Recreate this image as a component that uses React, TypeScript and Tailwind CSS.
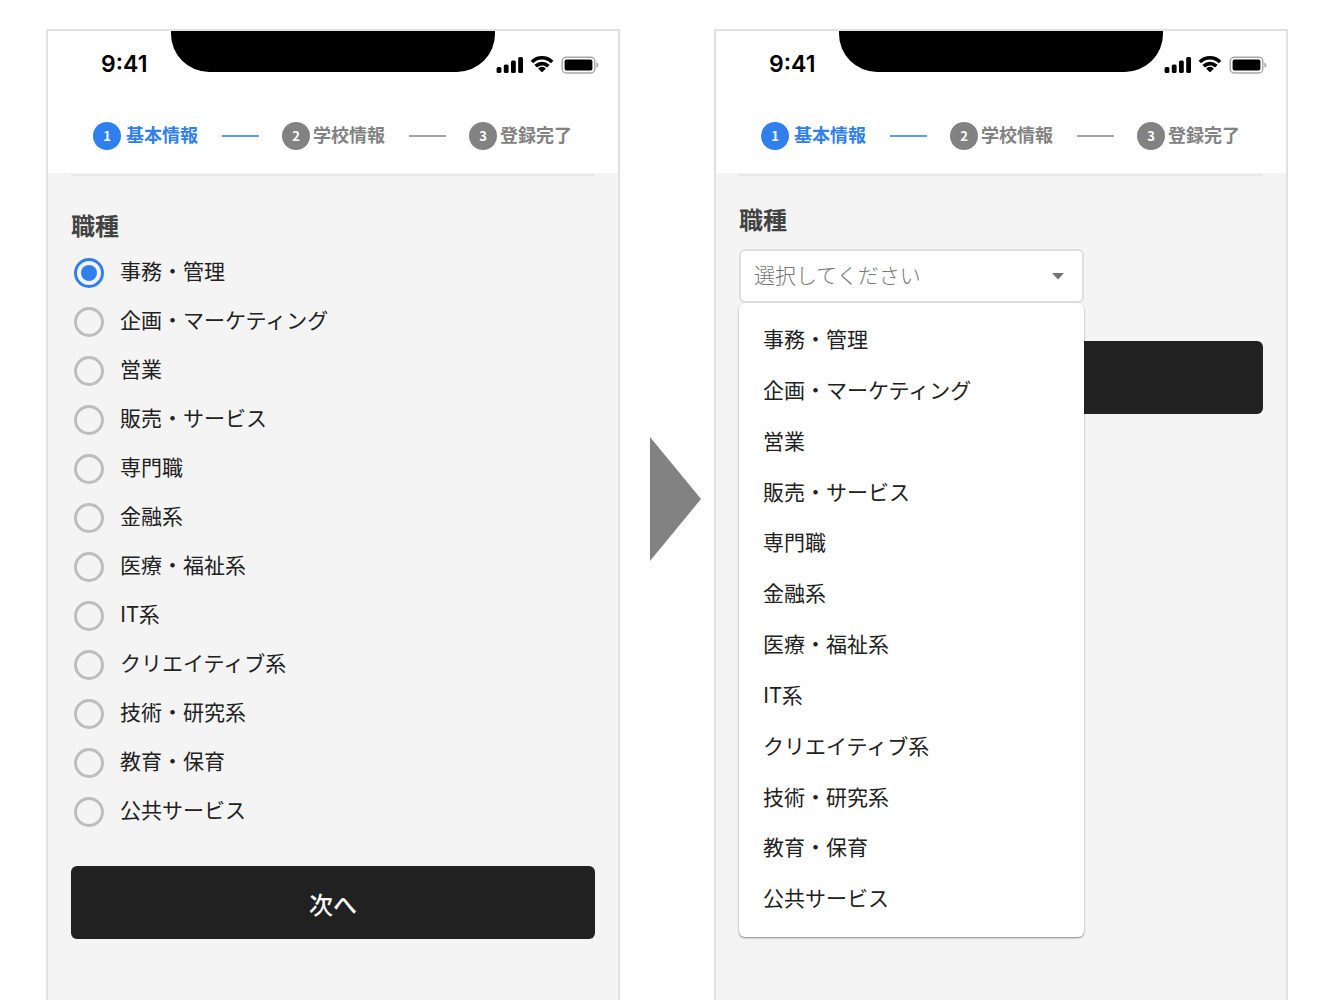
import { useState, type ReactNode } from 'react';

const jobs = [
  '事務・管理',
  '企画・マーケティング',
  '営業',
  '販売・サービス',
  '専門職',
  '金融系',
  '医療・福祉系',
  'IT系',
  'クリエイティブ系',
  '技術・研究系',
  '教育・保育',
  '公共サービス',
];

const steps = ['基本情報', '学校情報', '登録完了'];

function StatusIcons() {
  return (
    <svg width="104" height="20" viewBox="0 0 104 20" aria-hidden="true">
      <rect x="1.6" y="12" width="4.8" height="6" rx="1.5" />
      <rect x="8.8" y="9.4" width="4.8" height="8.6" rx="1.5" />
      <rect x="16" y="5.4" width="4.8" height="12.6" rx="1.5" />
      <rect x="23.2" y="2" width="4.8" height="16" rx="1.5" />
      <path d="M47 4.6c3.2 0 6.2 1.2 8.5 3.4.2.2.5.2.7 0l1.9-1.9c.2-.2.2-.5 0-.7A16.3 16.3 0 0 0 47 1a16.3 16.3 0 0 0-11.1 4.4c-.2.2-.2.5 0 .7L37.8 8c.2.2.5.2.7 0A12.3 12.3 0 0 1 47 4.6z" />
      <path d="M47 10.4c1.7 0 3.3.6 4.6 1.8.2.2.5.2.7 0l1.9-1.9c.2-.2.2-.6 0-.8A10.6 10.6 0 0 0 47 6.7a10.6 10.6 0 0 0-7.2 2.8c-.2.2-.2.6 0 .8l1.9 1.9c.2.2.5.2.7 0A6.9 6.9 0 0 1 47 10.4z" />
      <path d="M50.5 14c.2-.2.2-.5 0-.7a5.5 5.5 0 0 0-7 0c-.2.2-.2.5 0 .7l3.1 3.1c.2.2.6.2.8 0z" />
      <rect x="67.2" y="2.2" width="32.6" height="15.8" rx="4" fill="none" stroke="#a6a6a6" strokeWidth="1.4" />
      <rect x="69.6" y="4.6" width="27.8" height="11" rx="1.8" />
      <path d="M101.4 7.4v5.4c1.2-.4 2-1.4 2-2.7s-.8-2.3-2-2.7z" fill="#a6a6a6" />
    </svg>
  );
}

function StatusBar() {
  return (
    <div className="grid h-[67px] grid-cols-[1fr_324px_1fr]">
      <div className="flex items-center pl-[53px] font-['Inter'] text-[23px] font-semibold text-black">9:41</div>
      <div className="h-[41px] rounded-b-[38px] bg-black" />
      <div className="flex items-center">
        <StatusIcons />
      </div>
    </div>
  );
}

function Stepper() {
  return (
    <ol className="flex h-[75px] items-center justify-between pr-[46px] pl-[45px]">
      {steps.map((step, i) => (
        <li key={step} className="contents">
          {i > 0 && <span className={`h-[2px] w-[37px] ${i === 1 ? 'bg-[#5c9bf0]' : 'bg-[#a3a3a3]'}`} />}
          <span className={`flex items-center font-bold ${i === 0 ? 'gap-[5px] text-[#2f80ed]' : 'gap-[3px] text-[#828282]'}`}>
            <span className={`flex h-7 w-7 items-center justify-center rounded-full text-[13px] text-white ${i === 0 ? 'bg-[#2f80ed]' : 'bg-[#828282]'}`}>
              {i + 1}
            </span>
            <span className="pb-[3px] text-lg">{step}</span>
          </span>
        </li>
      ))}
    </ol>
  );
}

function Phone({ children }: { children: ReactNode }) {
  return (
    <section className="flex min-w-0 flex-1 flex-col border-2 border-b-0 border-[#e1e1e1] bg-[#f4f4f4]">
      <header className="bg-white">
        <StatusBar />
        <Stepper />
      </header>
      <div className="flex flex-col px-[23px] pt-px">
        <div className="h-[2px] bg-[#e8e8e8]" />
        {children}
      </div>
    </section>
  );
}

function NextButton() {
  return (
    <button type="button" className="h-[73px] w-full rounded-md bg-[#212121] pt-[3px] text-2xl font-medium text-white">
      次へ
    </button>
  );
}

function RadioForm() {
  const [job, setJob] = useState(jobs[0]);
  return (
    <form className="pt-[31px]">
      <fieldset>
        <legend className="h-[41px] text-2xl leading-9 font-bold text-[#424242]">職種</legend>
        {jobs.map(j => (
          <label key={j} className="flex h-[49px] items-center gap-4 pl-[3px] text-[21px] text-[#212121]">
            <input
              type="radio"
              name="job"
              value={j}
              checked={job === j}
              onChange={() => setJob(j)}
              className="flex h-[30px] w-[30px] shrink-0 appearance-none items-center justify-center rounded-full border-3 border-[#bdbdbd] before:h-4 before:w-4 before:rounded-full checked:border-[#2f80ed] checked:before:bg-[#2f80ed]"
            />
            <span className="pb-[3px]">{j}</span>
          </label>
        ))}
      </fieldset>
      <div className="pt-[30px]">
        <NextButton />
      </div>
    </form>
  );
}

function SelectForm() {
  const [job, setJob] = useState('');
  return (
    <form className="pt-[25px]">
      <label htmlFor="job-select" className="block h-12 text-2xl leading-9 font-bold text-[#424242]">
        職種
      </label>
      <div className="relative w-[345px] max-w-full">
        <select
          id="job-select"
          value={job}
          onChange={e => setJob(e.target.value)}
          className="block h-[54px] w-full appearance-none rounded-md border-2 border-[#dedede] bg-white px-[13px] pb-[3px] text-[21px] font-light text-[#757575]"
        >
          <option value="">選択してください</option>
          {jobs.map(j => (
            <option key={j}>{j}</option>
          ))}
        </select>
        <svg className="pointer-events-none absolute top-6 right-5 h-[7px] w-3" viewBox="0 0 12 7" aria-hidden="true">
          <path d="M0 0h12L6 6.5z" fill="#757575" />
        </svg>
        <ul className="absolute top-full left-0 z-10 flex h-[634px] w-full flex-col rounded-md bg-white py-3 shadow-[0_1px_2px_rgba(0,0,0,0.45)]">
          {jobs.map(j => (
            <li key={j} className="flex-1">
              <button type="button" onClick={() => setJob(j)} className="h-full w-full px-6 pb-[3px] text-left text-[21px] text-[#212121]">
                {j}
              </button>
            </li>
          ))}
        </ul>
      </div>
      <div className="pt-[38px]">
        <NextButton />
      </div>
    </form>
  );
}

export default function App() {
  return (
    <main className="flex min-h-screen bg-white pt-[29px] pr-[45px] pl-[46px] font-['Noto_Sans_CJK_JP','Noto_Sans',sans-serif]">
      <Phone>
        <RadioForm />
      </Phone>
      <div className="w-[94px] shrink-0 pt-[408px] pl-[30px]">
        <svg width="51" height="124" viewBox="0 0 51 124" aria-hidden="true">
          <path d="M0 0l51 62L0 124z" fill="#828282" />
        </svg>
      </div>
      <Phone>
        <SelectForm />
      </Phone>
    </main>
  );
}
